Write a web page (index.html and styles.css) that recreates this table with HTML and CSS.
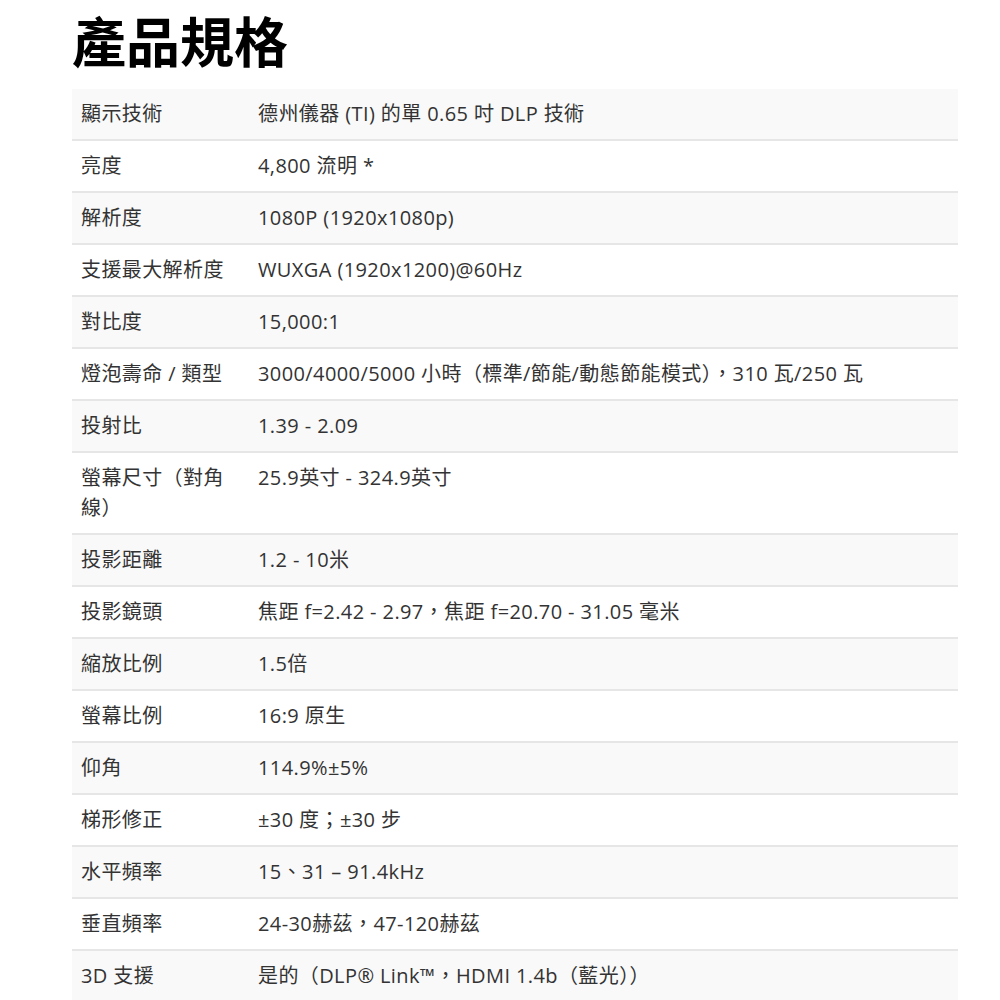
FILE: index.html
```html
<!DOCTYPE html>
<html lang="zh-Hant">
<head>
<meta charset="utf-8">
<title>產品規格</title>
<link rel="stylesheet" href="styles.css">
</head>
<body>
<div class="page">
  <h1 class="title">產品規格</h1>
  <table class="spec">
    <tbody>
      <tr><td class="k">顯示技術</td><td class="v">德州儀器 (TI) 的單 0.65 吋 DLP 技術</td></tr>
      <tr><td class="k">亮度</td><td class="v">4,800 流明 *</td></tr>
      <tr><td class="k">解析度</td><td class="v">1080P (1920x1080p)</td></tr>
      <tr><td class="k">支援最大解析度</td><td class="v">WUXGA (1920x1200)@60Hz</td></tr>
      <tr><td class="k">對比度</td><td class="v">15,000:1</td></tr>
      <tr><td class="k">燈泡壽命 / 類型</td><td class="v">3000/4000/5000 小時（標準/節能/動態節能模式），310 瓦/250 瓦</td></tr>
      <tr><td class="k">投射比</td><td class="v">1.39 - 2.09</td></tr>
      <tr><td class="k">螢幕尺寸（對角線）</td><td class="v">25.9英寸 - 324.9英寸</td></tr>
      <tr><td class="k">投影距離</td><td class="v">1.2 - 10米</td></tr>
      <tr><td class="k">投影鏡頭</td><td class="v">焦距 f=2.42 - 2.97，焦距 f=20.70 - 31.05 毫米</td></tr>
      <tr><td class="k">縮放比例</td><td class="v">1.5倍</td></tr>
      <tr><td class="k">螢幕比例</td><td class="v">16:9 原生</td></tr>
      <tr><td class="k">仰角</td><td class="v">114.9%±5%</td></tr>
      <tr><td class="k">梯形修正</td><td class="v">±30 度；±30 步</td></tr>
      <tr><td class="k">水平頻率</td><td class="v">15、31 – 91.4kHz</td></tr>
      <tr><td class="k">垂直頻率</td><td class="v">24-30赫茲，47-120赫茲</td></tr>
      <tr><td class="k">3D 支援</td><td class="v">是的（DLP® Link™，HDMI 1.4b（藍光））</td></tr>
    </tbody>
  </table>
</div>
</body>
</html>
```

FILE: styles.css
```css
html, body {
  margin: 0;
  padding: 0;
  background: #ffffff;
}

.page {
  padding: 10px 42px 0 72px;
  font-family: "Open Sans", "Noto Sans CJK TC", sans-serif;
  color: #333333;
}

.title {
  margin: 0 0 19px 0;
  font-family: "Noto Sans CJK TC", sans-serif;
  font-size: 54px;
  line-height: 60px;
  font-weight: 700;
  color: #000000;
}

.spec {
  width: 886px;
  border-collapse: collapse;
  font-size: 20px;
  line-height: 30px;
  letter-spacing: 0.4px;
}

.spec tr {
  border-bottom: 2px solid #e6e6e6;
}

.spec tr:nth-child(odd) {
  background: #f9f9f9;
}

.spec td {
  padding: 10px 9px;
  vertical-align: top;
  text-align: left;
}

.spec .k {
  width: 159px;
}
```
